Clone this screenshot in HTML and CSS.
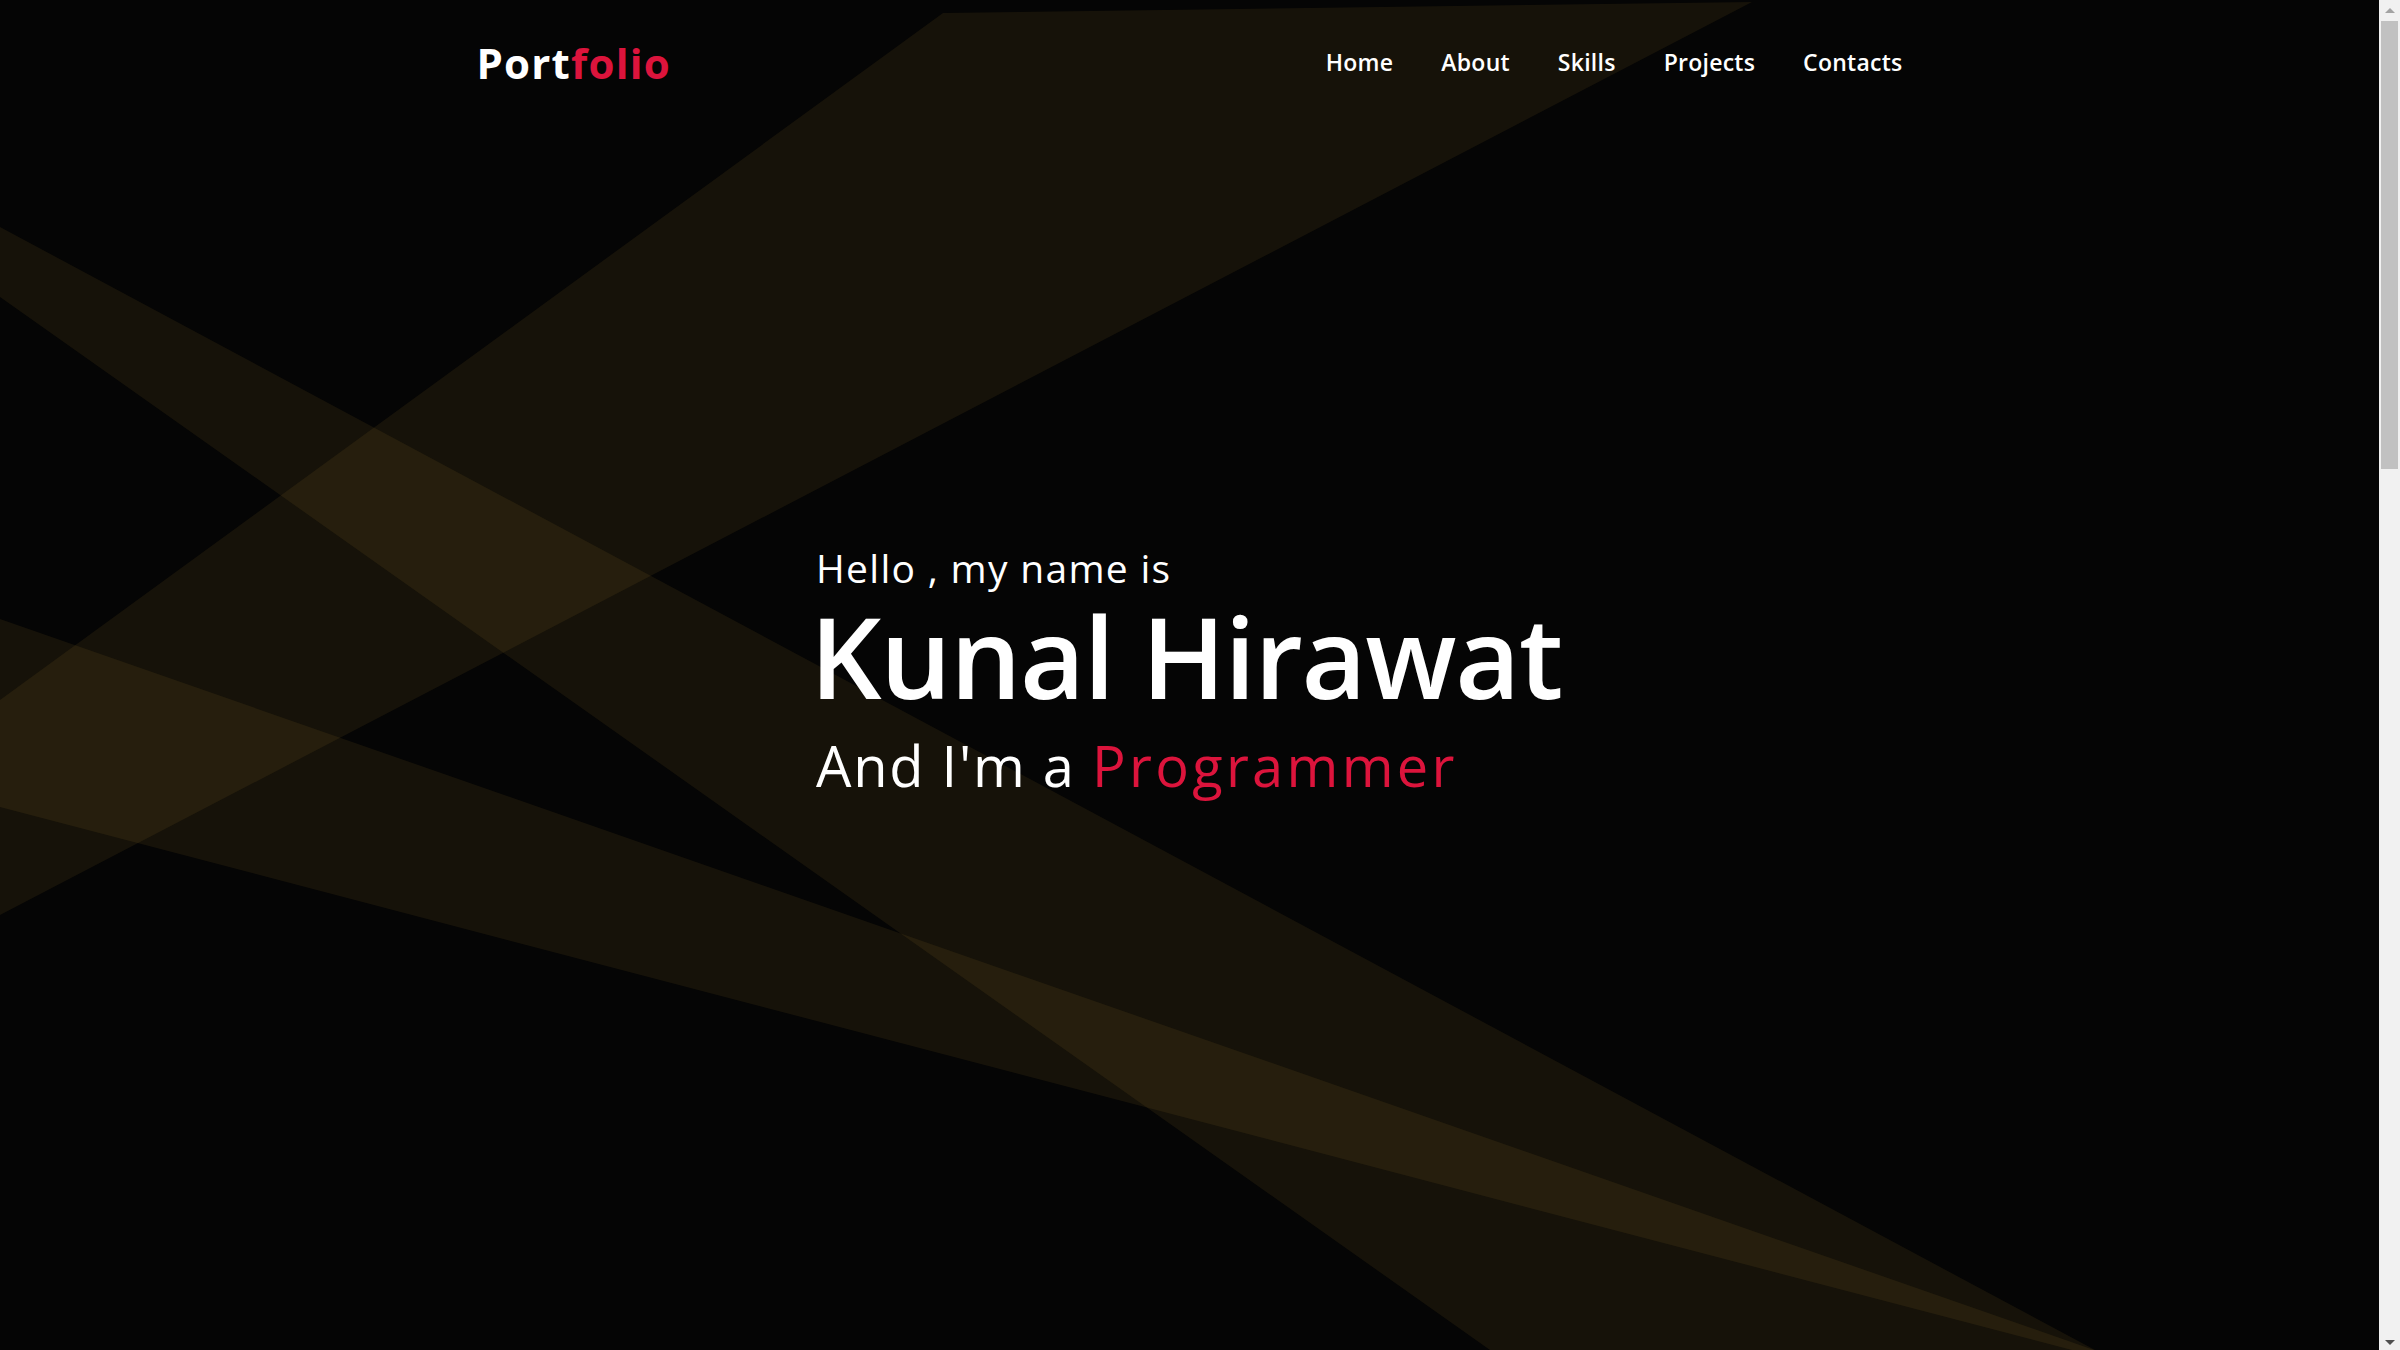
FILE: index.html
```html
<!DOCTYPE html>
<html lang="en">
<head>
<meta charset="utf-8">
<title>Portfolio</title>
<link rel="stylesheet" href="styles.css">
</head>
<body>
<div class="screen">
  <div class="page">
    <svg class="beams" width="2379" height="1350" viewBox="0 0 2379 1350" aria-hidden="true">
      <polygon class="beam" points="943,13 1752,2 0,915 0,700"/>
      <polygon class="beam" points="0,227 2095,1350 1490,1350 0,297"/>
      <polygon class="beam" points="0,619 2094,1350 2072,1350 0,807"/>
    </svg>
    <nav class="navbar">
      <div class="nav-inner">
        <a class="logo" href="#">Port<span>folio</span></a>
        <ul class="menu">
          <li><a href="#">Home</a></li>
          <li><a href="#">About</a></li>
          <li><a href="#">Skills</a></li>
          <li><a href="#">Projects</a></li>
          <li><a href="#">Contacts</a></li>
        </ul>
      </div>
    </nav>
    <section class="home">
      <div class="home-content">
        <div class="text-1">Hello , my name is</div>
        <div class="text-2">Kunal Hirawat</div>
        <div class="text-3">And I'm a <span>Programmer</span></div>
      </div>
    </section>
  </div>
  <div class="scrollbar">
    <div class="sb-btn"><i class="arrow-up"></i></div>
    <div class="sb-track"><div class="sb-thumb"></div></div>
    <div class="sb-btn"><i class="arrow-down"></i></div>
  </div>
</div>
</body>
</html>
```

FILE: styles.css
```css
* {
  margin: 0;
  padding: 0;
  box-sizing: border-box;
}

html, body {
  width: 100%;
  height: 100%;
  overflow: hidden;
  background: #050505;
}

body {
  font-family: "Open Sans", "Noto Sans", "DejaVu Sans", sans-serif;
  color: #fff;
}

.screen {
  display: flex;
  width: 2400px;
  height: 1350px;
}

.page {
  position: relative;
  flex: 1;
  height: 1350px;
  overflow: hidden;
  background: #050505;
}

.beams {
  position: absolute;
  left: 0;
  top: 0;
  z-index: 0;
}

.beam {
  fill: rgb(255, 195, 70);
  fill-opacity: 0.07;
}

.navbar {
  position: relative;
  z-index: 1;
}

.nav-inner {
  width: 1426px;
  height: 126px;
  margin: 0 auto;
  display: flex;
  align-items: center;
  justify-content: space-between;
}

.logo {
  font-size: 42px;
  line-height: 1;
  font-weight: 700;
  color: #fff;
  text-decoration: none;
  letter-spacing: 1.2px;
}

.logo span {
  color: crimson;
}

.menu {
  list-style: none;
  display: flex;
  gap: 48px;
}

.menu a {
  font-size: 23px;
  line-height: 1;
  font-weight: 600;
  color: #fff;
  text-decoration: none;
  letter-spacing: 0.25px;
}

.home {
  position: relative;
  z-index: 1;
  padding: 422px 0 0 816px;
}

.home-content {
  color: #fff;
}

.text-1 {
  font-size: 39px;
  line-height: 1;
  font-weight: 400;
  letter-spacing: 1.3px;
}

.text-2 {
  font-size: 112px;
  line-height: 1;
  font-weight: 600;
  margin: 13px 0 0 -6px;
  letter-spacing: -1.25px;
}

.text-3 {
  font-size: 56px;
  line-height: 1;
  font-weight: 400;
  margin-top: 25px;
  letter-spacing: 1.75px;
}

.text-3 span {
  color: crimson;
  font-weight: 500;
  letter-spacing: 3.3px;
}

.scrollbar {
  width: 21px;
  height: 1350px;
  background: #f1f1f1;
  display: flex;
  flex-direction: column;
}

.sb-btn {
  height: 21px;
  display: flex;
  align-items: center;
  justify-content: center;
  padding-left: 1px;
}

.arrow-up {
  width: 0;
  height: 0;
  border-left: 5px solid transparent;
  border-right: 5px solid transparent;
  border-bottom: 5px solid #a3a3a3;
}

.arrow-down {
  width: 0;
  height: 0;
  border-left: 5px solid transparent;
  border-right: 5px solid transparent;
  border-top: 5px solid #505050;
  margin-top: 6px;
}

.sb-track {
  flex: 1;
  padding: 0 2px;
}

.sb-thumb {
  height: 448px;
  background: #c1c1c1;
}
```
